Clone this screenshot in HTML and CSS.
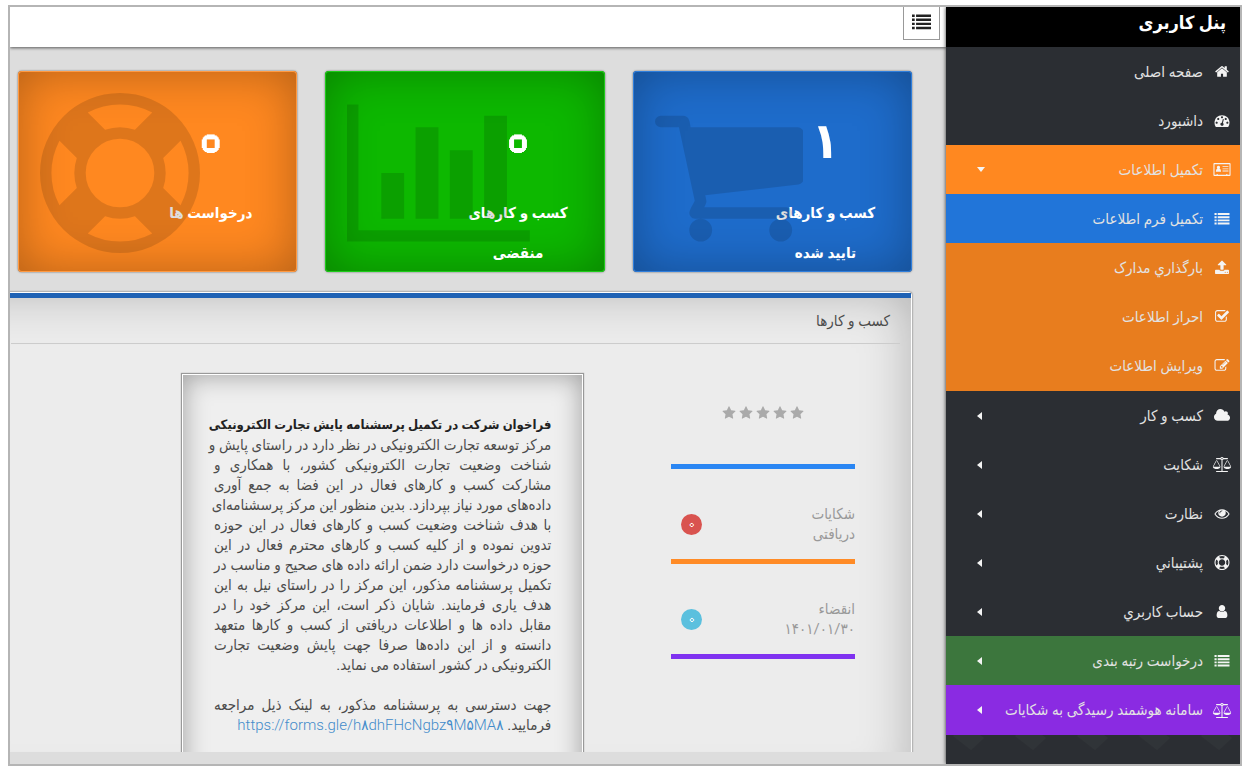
FILE: index.html
```html
<!DOCTYPE html>
<html lang="fa" dir="rtl">
<head>
    <meta charset="utf-8">
    <title>پنل کاربری</title>
    <meta name="viewport" content="width=device-width, initial-scale=1.0">
    <link rel="stylesheet" href="styles.css">
</head>
<body>
    <!-- icons used more than once -->
    <svg class="sprite" aria-hidden="true">
        <symbol id="i-list" viewBox="0 0 1792 1792"><path d="M0 236h256v232H0zM384 236h1408v232H384zM0 620h256v232H0zM384 620h1408v232H384zM0 1004h256v232H0zM384 1004h1408v232H384zM0 1388h256v232H0zM384 1388h1408v232H384z"/></symbol>
        <symbol id="i-scale" viewBox="0 0 2176 1792"><path d="M1728 448l-384 704h768zm-1280 0l-384 704h768zm821-192q-14 40-45.500 71.500t-71.500 45.500v1291h608q14 0 23 9t9 23v64q0 14-9 23t-23 9h-1344q-14 0-23-9t-9-23v-64q0-14 9-23t23-9h608v-1291q-40-14-71.500-45.500t-45.500-71.500h-491q-14 0-23-9t-9-23v-64q0-14 9-23t23-9h491q21-57 70-92.500t111-35.500 111 35.500 70 92.500h491q14 0 23 9t9 23v64q0 14-9 23t-23 9h-491zm-181 16q33 0 56.500-23.500t23.500-56.500-23.500-56.500-56.500-23.500-56.500 23.500-23.500 56.500 23.500 56.500 56.500 23.500zm1088 880q0 73-46.500 131t-117.500 91-144.500 49.500-139.500 16.500-139.500-16.500-144.500-49.500-117.500-91-46.500-131q0-11 35-81t92-174.500 107-195.500 102-184 56-100q18-33 56-33t56 33q4 7 56 100t102 184 107 195.500 92 174.500 35 81zm-1280 0q0 73-46.500 131t-117.500 91-144.500 49.500-139.500 16.500-139.500-16.500-144.500-49.500-117.500-91-46.500-131q0-11 35-81t92-174.500 107-195.500 102-184 56-100q18-33 56-33t56 33q4 7 56 100t102 184 107 195.500 92 174.500 35 81z"/></symbol>
        <symbol id="i-ring" viewBox="0 0 1792 1792"><path d="M896 0q182 0 348 71t286 191 191 286 71 348-71 348-191 286-286 191-348 71-348-71-286-191-191-286-71-348 71-348 191-286 286-191 348-71zm0 128q-190 0-361 90l194 194q82-28 167-28t167 28l194-194q-171-90-361-90zm-678 1129l194-194q-28-82-28-167t28-167l-194-194q-90 171-90 361t90 361zm678 407q190 0 361-90l-194-194q-82 28-167 28t-167-28l-194 194q171 90 361 90zm0-384q159 0 271.500-112.500t112.500-271.500-112.500-271.500-271.500-112.500-271.500 112.500-112.500 271.500 112.500 271.500 271.500 112.500zm484-217l194 194q90-171 90-361t-90-361l-194 194q28 82 28 167t-28 167z"/></symbol>
        <symbol id="i-star" viewBox="0 0 1792 1792"><path d="M1728 647q0 22-26 48l-363 354 86 500q1 7 1 20 0 21-10.500 35.500t-30.500 14.500q-19 0-40-12l-449-236-449 236q-22 12-40 12-21 0-31.500-14.500t-10.500-35.500q0-6 2-20l86-500-364-354q-25-27-25-48 0-37 56-46l502-73 225-455q19-41 49-41t49 41l225 455 502 73q56 9 56 46z"/></symbol>
    </svg>

    <div class="app">
        <aside class="sidebar">
            <h1 class="brand">پنل کاربری</h1>
            <nav class="menu">
                <a href="#"><svg class="icon" viewBox="0 0 1792 1792"><path d="M1472 992v480q0 26-19 45t-45 19h-384v-384h-256v384h-384q-26 0-45-19t-19-45v-480q0-1 .5-3t.5-3l575-474 575 474q1 2 1 6zm223-69l-62 74q-8 9-21 11h-3q-13 0-21-7l-692-577-692 577q-12 8-24 7-13-2-21-11l-62-74q-8-10-7-23.500t11-21.500l719-599q32-26 76-26t76 26l244 204v-195q0-14 9-23t23-9h192q14 0 23 9t9 23v408l219 182q10 8 11 21.500t-7 23.500z"/></svg>صفحه اصلی</a>
                <a href="#"><svg class="icon" viewBox="0 0 1792 1792"><path d="M384 1152q0-53-37.500-90.500t-90.500-37.500-90.500 37.500-37.500 90.500 37.500 90.500 90.500 37.500 90.500-37.500 37.500-90.500zm192-448q0-53-37.500-90.500t-90.500-37.500-90.500 37.500-37.500 90.500 37.500 90.500 90.500 37.500 90.500-37.500 37.500-90.500zm428 481l101-382q6-26-7.500-48.500t-38.500-29.500-48 6.500-30 39.500l-101 382q-60 5-107 43.500t-63 98.500q-20 77 20 146t117 89 146-20 89-117q16-60-6-117t-72-91zm660-33q0-53-37.500-90.500t-90.500-37.500-90.500 37.500-37.500 90.500 37.500 90.500 90.500 37.500 90.500-37.500 37.500-90.500zm-640-640q0-53-37.500-90.500t-90.500-37.500-90.500 37.500-37.500 90.500 37.500 90.500 90.500 37.500 90.500-37.500 37.500-90.500zm448 192q0-53-37.500-90.500t-90.500-37.500-90.500 37.500-37.500 90.500 37.500 90.500 90.500 37.500 90.500-37.500 37.500-90.500zm320 448q0 261-141 483-19 29-54 29h-1402q-35 0-54-29-141-221-141-483 0-182 71-348t191-286 286-191 348-71 348 71 286 191 191 286 71 348z"/></svg>داشبورد</a>
                <a href="#" class="open"><svg class="icon" viewBox="0 0 2048 1792"><path fill-rule="evenodd" d="M100 128h1848q100 0 100 100v1336q0 100-100 100H100Q0 1664 0 1564V228Q0 128 100 128zm28 128v1280h256v-96h128v96h1024v-96h128v96h256V256zM600 448a190 190 0 0 1 130 330q160 60 174 300v74H296v-74q14-240 174-300A190 190 0 0 1 600 448zM1088 512h704v96h-704zM1088 768h704v96h-704zM1088 1024h704v96h-704z"/></svg>تکمیل اطلاعات<span class="caret caret-down"></span></a>
                <div class="submenu">
                    <a href="#" class="active"><svg class="icon"><use href="#i-list"/></svg>تکمیل فرم اطلاعات</a>
                    <a href="#"><svg class="icon" viewBox="0 0 1792 1792"><path d="M1344 1472q0-26-19-45t-45-19-45 19-19 45 19 45 45 19 45-19 19-45zm256 0q0-26-19-45t-45-19-45 19-19 45 19 45 45 19 45-19 19-45zm128-224v320q0 40-28 68t-68 28h-1472q-40 0-68-28t-28-68v-320q0-40 28-68t68-28h427q21 56 70.500 92t110.500 36h256q61 0 110.500-36t70.500-92h427q40 0 68 28t28 68zm-325-648q-17 40-59 40h-256v448q0 26-19 45t-45 19h-256q-26 0-45-19t-19-45v-448h-256q-42 0-59-40-17-39 14-69l448-448q18-19 45-19t45 19l448 448q31 30 14 69z"/></svg>بارگذاري مدارک</a>
                    <a href="#"><svg class="icon" viewBox="0 0 1792 1792"><path d="M1472 930v318q0 119-84.500 203.500t-203.500 84.500h-832q-119 0-203.500-84.500t-84.500-203.500v-832q0-119 84.500-203.500t203.500-84.500h832q63 0 117 25 15 7 18 23 3 17-9 29l-49 49q-10 10-23 10-3 0-9-2-23-6-45-6h-832q-66 0-113 47t-47 113v832q0 66 47 113t113 47h832q66 0 113-47t47-113v-254q0-13 9-22l64-64q10-10 23-10 6 0 12 3 20 8 20 29zm231-489l-814 814q-24 24-57 24t-57-24l-430-430q-24-24-24-57t24-57l110-110q24-24 57-24t57 24l263 263 647-647q24-24 57-24t57 24l110 110q24 24 24 57t-24 57z"/></svg>احراز اطلاعات</a>
                    <a href="#"><svg class="icon" viewBox="0 0 1792 1792"><path d="M888 1184l116-116-152-152-116 116v56h96v96h56zm440-720q-16-16-33 1l-350 350q-17 17-1 33t33-1l350-350q17-17 1-33zm80 594v190q0 119-84.500 203.500t-203.500 84.500h-832q-119 0-203.500-84.500t-84.500-203.500v-832q0-119 84.500-203.500t203.500-84.500h832q63 0 117 25 15 7 18 23 3 17-9 29l-49 49q-14 14-32 8-23-6-45-6h-832q-66 0-113 47t-47 113v832q0 66 47 113t113 47h832q66 0 113-47t47-113v-126q0-13 9-22l64-64q15-15 35-7t20 29zm-96-738l288 288-672 672h-288v-288zm444 132l-92 92-288-288 92-92q28-28 68-28t68 28l152 152q28 28 28 68t-28 68z"/></svg>ویرایش اطلاعات</a>
                </div>
                <a href="#"><svg class="icon" viewBox="0 0 2048 1792"><path d="M1984 1152q0 159-112.500 271.500t-271.500 112.500h-1088q-185 0-316.500-131.500t-131.500-316.500q0-132 71-241.500t187-163.500q-2-28-2-43 0-212 150-362t362-150q158 0 286.500 88t187.500 230q70-62 166-62 106 0 181 75t75 181q0 75-41 138 129 30 213 134.500t84 239.500z"/></svg>کسب و کار<span class="caret"></span></a>
                <a href="#"><svg class="icon"><use href="#i-scale"/></svg>شکایت<span class="caret"></span></a>
                <a href="#"><svg class="icon" viewBox="0 0 1792 1792"><path d="M1664 960q-152-236-381-353 61 104 61 225 0 185-131.500 316.500t-316.500 131.500-316.500-131.500-131.500-316.500q0-121 61-225-229 117-381 353 133 205 333.500 326.500t434.500 121.500 434.500-121.500 333.500-326.500zm-720-384q0-20-14-34t-34-14q-125 0-214.500 89.500t-89.500 214.500q0 20 14 34t34 14 34-14 14-34q0-86 61-147t147-61q20 0 34-14t14-34zm848 384q0 34-20 69-140 230-376.500 368.500t-499.500 138.500-499.500-139-376.500-368q-20-35-20-69t20-69q140-229 376.500-368t499.500-139 499.500 139 376.500 368q20 35 20 69z"/></svg>نظارت<span class="caret"></span></a>
                <a href="#"><svg class="icon"><use href="#i-ring"/></svg>پشتیباني<span class="caret"></span></a>
                <a href="#"><svg class="icon" viewBox="0 0 1792 1792"><path d="M1536 1399q0 109-62.500 187t-150.500 78h-854q-88 0-150.500-78t-62.500-187q0-85 8.500-160.500t31.500-152 58.500-131 94-89 134.500-34.500q131 128 313 128t313-128q76 0 134.500 34.500t94 89 58.500 131 31.500 152 8.500 160.500zm-256-887q0 159-112.500 271.500t-271.500 112.500-271.500-112.500-112.500-271.500 112.500-271.500 271.500-112.500 271.500 112.500 112.500 271.500z"/></svg>حساب کاربري<span class="caret"></span></a>
                <a href="#" class="green"><svg class="icon"><use href="#i-list"/></svg>درخواست رتبه بندی<span class="caret"></span></a>
                <a href="#" class="purple"><svg class="icon"><use href="#i-scale"/></svg>سامانه هوشمند رسیدگی به شکایات<span class="caret"></span></a>
            </nav>
            <svg class="pattern" aria-hidden="true">
                <defs>
                    <pattern id="tiles" width="62" height="30" patternUnits="userSpaceOnUse">
                        <path d="M7 1l18 14 13-12-4-3H8z" fill="#303438"/>
                    </pattern>
                </defs>
                <rect width="100%" height="30" fill="url(#tiles)"/>
            </svg>
        </aside>

        <div class="main">
            <header class="topbar">
                <button type="button" class="toggle" aria-label="منو"><svg><use href="#i-list"/></svg></button>
            </header>

            <main class="content">
                <div class="cards">
                    <section class="card blue">
                        <strong>۱</strong>
                        <p>کسب و کارهای<br>تایید شده</p>
                        <svg viewBox="64 0 1664 1792"><path d="M704 1536q0 52-38 90t-90 38-90-38-38-90 38-90 90-38 90 38 38 90zm896 0q0 52-38 90t-90 38-90-38-38-90 38-90 90-38 90 38 38 90zm128-1088v512q0 24-16.500 42.500t-40.500 21.500l-1044 122q13 60 13 70 0 16-24 64h920q26 0 45 19t19 45-19 45-45 19h-1024q-26 0-45-19t-19-45q0-11 8-31.500t16-36 21.500-40 15.500-29.500l-177-823h-204q-26 0-45-19t-19-45 19-45 45-19h256q16 0 28.500 6.500t19.500 15.500 13 24.500 8 26 5.500 29.500 4.500 26h1201q26 0 45 19t19 45z"/></svg>
                    </section>
                    <section class="card lime">
                        <strong class="zero">۰</strong>
                        <p>کسب و کارهای<br>منقضی</p>
                        <svg viewBox="0 0 2048 1792"><path d="M640 896v512h-256v-512h256zm384-512v1024h-256v-1024h256zm1024 1152v128h-2048v-1536h128v1408h1920zm-640-896v768h-256v-768h256zm384-384v1152h-256v-1152h256z"/></svg>
                    </section>
                    <section class="card orange">
                        <strong class="zero">۰</strong>
                        <p>درخواست ها</p>
                        <svg viewBox="0 0 1792 1792"><use href="#i-ring"/></svg>
                    </section>
                </div>

                <section class="panel">
                    <h2>کسب و کارها</h2>
                    <div class="panel-body">
                        <div class="stats">
                            <div class="stat stars">
                                <svg><use href="#i-star"/></svg>
                                <svg><use href="#i-star"/></svg>
                                <svg><use href="#i-star"/></svg>
                                <svg><use href="#i-star"/></svg>
                                <svg><use href="#i-star"/></svg>
                            </div>
                            <div class="stat line-orange">
                                <span>شکایات<br>دریافتی</span>
                                <span class="badge red">۰</span>
                            </div>
                            <div class="stat line-purple">
                                <span>انقضاء<br>۱۴۰۱/۰۱/۳۰</span>
                                <span class="badge cyan">۰</span>
                            </div>
                        </div>

                        <article class="notice">
                            <h3>فراخوان شرکت در تکمیل پرسشنامه پایش تجارت الکترونیکی</h3>
                            <p class="full">مرکز توسعه تجارت الکترونیکی در نظر دارد در راستای پایش و<br>
                            شناخت وضعیت تجارت الکترونیکی کشور، با همکاری و<br>
                            مشارکت کسب و کارهای فعال در این فضا به جمع آوری<br>
                            داده‌های مورد نیاز بپردازد. بدین منظور این مرکز پرسشنامه‌ای<br>
                            با هدف شناخت وضعیت کسب و کارهای فعال در این حوزه<br>
                            تدوین نموده و از کلیه کسب و کارهای محترم فعال در این<br>
                            حوزه درخواست دارد ضمن ارائه داده های صحیح و مناسب در<br>
                            تکمیل پرسشنامه مذکور، این مرکز را در راستای نیل به این<br>
                            هدف یاری فرمایند. شایان ذکر است، این مرکز خود را در<br>
                            مقابل داده ها و اطلاعات دریافتی از کسب و کارها متعهد<br>
                            دانسته و از این داده‌ها صرفا جهت پایش وضعیت تجارت</p>
                            <p>الکترونیکی در کشور استفاده می نماید.</p>
                            <br>
                            <p class="full">جهت دسترسی به پرسشنامه مذکور، به لینک ذیل مراجعه</p>
                            <p>فرمایید. <a href="#" dir="ltr">https://forms.gle/h۸dhFHcNgbz۹M۵MA۸</a></p>
                        </article>
                    </div>
                </section>
            </main>
        </div>
    </div>
</body>
</html>
```

FILE: styles.css
```css
* {
    box-sizing: border-box;
}
body {
    margin: 0;
    padding: 5px 8px;
    background-color: #fff;
    color: #4c4c4c;
    font-family: Roboto, "DejaVu Sans Condensed", "DejaVu Sans", sans-serif;
    font-size: 15px;
    line-height: 20px;
}
h1, h2, h3, p {
    margin: 0;
}
a {
    color: #428bca;
    text-decoration: none;
}
svg {
    fill: currentColor;
}
.sprite {
    position: absolute;
    width: 0;
    height: 0;
}
.app {
    display: flex;
    height: calc(100vh - 10px);
    border: 2px solid #b5b5b5;
    overflow: hidden;
}

/* sidebar */
.sidebar {
    flex: none;
    width: 294px;
    background-color: #2b2e33;
    color: #e2e2e2;
    box-shadow: 0 0 4px rgba(0, 0, 0, 0.8);
    z-index: 1;
    overflow: hidden;
}
.brand {
    height: 40px;
    padding: 0 14px;
    background-color: #000;
    color: #fff;
    font-size: 18px;
    line-height: 32px;
}
.menu a {
    display: flex;
    align-items: center;
    gap: 9px;
    height: 49px;
    padding-right: 8px;
    padding-left: 31px;
    color: inherit;
    white-space: nowrap;
}
.icon {
    flex: none;
    width: 20px;
    height: 15px;
    color: #f4f4f4;
}
.menu .open {
    background-color: #ff8820;
}
.submenu {
    padding-bottom: 1px;
    background-color: #e87d1e;
}
.menu .active {
    background-color: #2175d9;
}
.menu .green {
    background-color: #3c763d;
}
.menu .purple {
    height: 50px;
    background-color: #8a2be2;
}
.caret {
    margin-right: auto;
    border: 4px solid transparent;
    border-right: 5px solid #f4f4f4;
    border-left: 0;
}
.caret-down {
    border: 4px solid transparent;
    border-top: 5px solid #f4f4f4;
    border-bottom: 0;
}
.pattern {
    display: block;
    width: 100%;
    height: 30px;
}

/* main column */
.main {
    flex: 1;
    min-width: 0;
    display: flex;
    flex-direction: column;
    background-color: #ddd;
}
.topbar {
    flex: none;
    height: 40px;
    padding: 0 6px;
    background-color: #fff;
    box-shadow: 0 1px 3px rgba(0, 0, 0, 0.6);
}
.toggle {
    display: block;
    width: 37px;
    height: 33px;
    padding: 4px 8px 8px;
    border: 1px solid #999;
    border-top: 0;
    background-color: #fff;
    color: #222;
}
.toggle svg {
    display: block;
    width: 19px;
    height: 19px;
}
.content {
    flex: 1;
    min-height: 0;
    margin-bottom: 12px;
    padding: 24px 34px 0 0;
    overflow: hidden;
}

/* summary cards */
.cards {
    display: grid;
    grid-template-columns: repeat(3, 1fr);
    gap: 28px;
    padding-left: 8px;
}
.card {
    position: relative;
    height: 201px;
    padding: 32px 0 0 38%;
    border-radius: 4px;
    color: #fff;
    text-align: center;
}
.card strong {
    display: block;
    margin-bottom: 14px;
    font-size: 50px;
    line-height: 76px;
}
.card p {
    font-size: 15px;
    font-weight: bold;
    line-height: 40px;
}
.card svg {
    position: absolute;
    top: 22px;
    left: 22px;
    height: 160px;
    color: rgba(0, 0, 0, 0.13);
}
.blue {
    background-color: #1e6ccb;
    box-shadow: 0 0 2px #555, inset 0 0 0 1px #2f7edb, inset 0 0 50px rgba(0, 0, 0, 0.3);
}
.lime {
    background-color: #0db800;
    box-shadow: 0 0 2px #555, inset 0 0 0 1px #1ecb1a, inset 0 0 50px rgba(0, 0, 0, 0.3);
}
.orange {
    background-color: #ff8820;
    box-shadow: 0 0 2px #555, inset 0 0 0 1px #ff9a42, inset 0 0 50px rgba(0, 0, 0, 0.3);
}
/* outlined digit: white ring, card colour in the middle */
.zero {
    text-shadow: 5px 0 #fff, 4px 2px #fff, 3px 3px #fff, 2px 4px #fff,
        0 5px #fff, -2px 4px #fff, -3px 3px #fff, -4px 2px #fff,
        -5px 0 #fff, -4px -2px #fff, -3px -3px #fff, -2px -4px #fff,
        0 -5px #fff, 2px -4px #fff, 3px -3px #fff, 4px -2px #fff;
}
.lime .zero {
    color: #0db800;
}
.orange .zero {
    color: #ff8820;
}

/* businesses panel, runs past the left and bottom edges */
.panel {
    margin: 20px 0 0 -60px;
    padding-left: 60px;
    border: 1px solid #fff;
    border-radius: 3px;
    background-color: #ececec;
    box-shadow: 0 0 2px #444, inset 0 0 50px rgba(0, 0, 0, 0.25);
}
.panel h2 {
    margin-right: 11px;
    padding: 13px 10px 12px;
    border-bottom: 1px solid #ccc;
    font-size: 15px;
    font-weight: normal;
}
.panel::before {
    content: "";
    display: block;
    height: 5px;
    margin-left: -60px;
    background-color: #1f62b5;
}
.panel-body {
    display: grid;
    grid-template-columns: minmax(0, 184fr) minmax(0, 402fr);
    gap: 88px;
    padding: 30px 56px 0 171px;
}
.stat {
    display: flex;
    align-items: center;
    justify-content: space-between;
    height: 95px;
    padding-top: 35px;
    padding-bottom: 15px;
    border-bottom: 5px solid #2a86f3;
    color: #999;
}
.stars {
    justify-content: center;
    gap: 3px;
    padding-top: 0;
    padding-bottom: 12px;
    color: #aaa;
}
.stars svg {
    width: 14px;
    height: 14px;
}
.line-orange {
    border-color: #ff8b26;
}
.line-purple {
    border-color: #7f32f0;
}
.badge {
    width: 21px;
    height: 21px;
    margin-left: 10px;
    border-radius: 50%;
    font-size: 12px;
    font-weight: bold;
    text-align: center;
    text-shadow: 1px 0 #fff, -1px 0 #fff, 0 1px #fff, 0 -1px #fff;
}
.red {
    background-color: #d9534f;
    color: #d9534f;
}
.cyan {
    background-color: #5bc0de;
    color: #5bc0de;
}
.notice {
    padding: 40px 31px 60px;
    border: 1px solid #fff;
    background-color: #efefef;
    box-shadow: 0 0 1px 1px #999, inset 0 0 26px rgba(0, 0, 0, 0.35);
}
.notice h3 {
    color: #222;
    font-size: 13px;
    white-space: nowrap;
}
.notice p {
    white-space: nowrap;
}
.notice .full {
    text-align: justify;
    text-align-last: justify;
}
.notice a {
    font-weight: 300;
}
```
